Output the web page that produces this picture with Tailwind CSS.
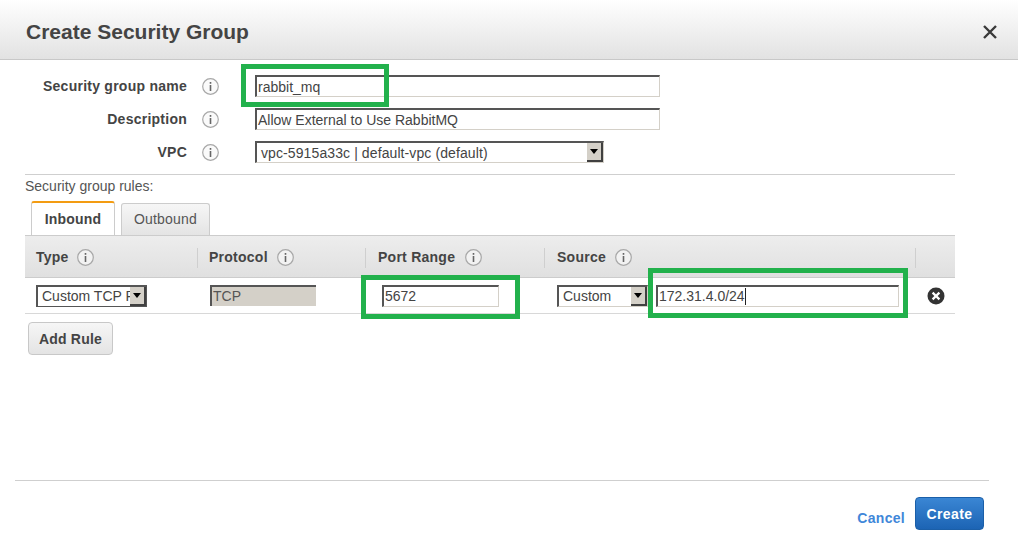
<!DOCTYPE html>
<html><head><meta charset="utf-8"><script src="https://cdn.jsdelivr.net/npm/@tailwindcss/browser@4"></script></head>
<body class="bg-white">
<div class="relative w-[1018px] h-[544px] overflow-hidden bg-white font-['Liberation_Sans',Arial,sans-serif] text-[#444]">
  <header class="h-[60px] flex items-center justify-between pt-[4px] pl-[26px] pr-[20px] bg-gradient-to-b from-white to-[#e2e2e2] border-b border-[#c8c8c8]">
    <h1 class="text-[21px] font-bold leading-none text-[#444]">Create Security Group</h1>
    <svg width="16" height="16" viewBox="0 0 16 16" class="block"><path d="M2 2 L14 14 M14 2 L2 14" stroke="#3a3a3a" stroke-width="2.4" fill="none"/></svg>
  </header>

  <section class="pt-[15px] flex flex-col gap-[11px]">
    <div class="flex items-center h-[22px]">
      <label class="w-[187px] text-right text-[14px] font-bold tracking-[0.25px]">Security group name</label>
      <span class="ml-[15px] mr-[36px]"><svg width="17" height="17" viewBox="0 0 17 17" class="block"><circle cx="8.5" cy="8.5" r="7.8" fill="#fafafa" stroke="#a8a8a8" stroke-width="1.2"/><rect x="7.7" y="7" width="1.6" height="6" fill="#666"/><rect x="7.7" y="4" width="1.6" height="1.8" fill="#666"/></svg></span>
      <div class="w-[405px] h-[22px] border-2 border-t-[#555] border-l-[#555] border-r-[#d4d0c8] border-b-[#d4d0c8] border-r border-b pl-px text-[14px] leading-[20px] text-[#444] whitespace-nowrap">rabbit_mq</div>
    </div>
    <div class="flex items-center h-[22px]">
      <label class="w-[187px] text-right text-[14px] font-bold tracking-[0.25px]">Description</label>
      <span class="ml-[15px] mr-[36px]"><svg width="17" height="17" viewBox="0 0 17 17" class="block"><circle cx="8.5" cy="8.5" r="7.8" fill="#fafafa" stroke="#a8a8a8" stroke-width="1.2"/><rect x="7.7" y="7" width="1.6" height="6" fill="#666"/><rect x="7.7" y="4" width="1.6" height="1.8" fill="#666"/></svg></span>
      <div class="w-[405px] h-[22px] border-2 border-t-[#555] border-l-[#555] border-r-[#d4d0c8] border-b-[#d4d0c8] border-r border-b pl-px text-[14px] leading-[20px] text-[#444] whitespace-nowrap">Allow External to Use RabbitMQ</div>
    </div>
    <div class="flex items-center h-[22px]">
      <label class="w-[187px] text-right text-[14px] font-bold tracking-[0.25px]">VPC</label>
      <span class="ml-[15px] mr-[36px]"><svg width="17" height="17" viewBox="0 0 17 17" class="block"><circle cx="8.5" cy="8.5" r="7.8" fill="#fafafa" stroke="#a8a8a8" stroke-width="1.2"/><rect x="7.7" y="7" width="1.6" height="6" fill="#666"/><rect x="7.7" y="4" width="1.6" height="1.8" fill="#666"/></svg></span>
      <div class="w-[349px] h-[22px] flex justify-between border-2 border-t-[#555] border-l-[#555] border-r-[#d4d0c8] border-b-[#d4d0c8] border-r border-b pl-[4px] text-[14px] tracking-[0.1px] leading-[20px] text-[#444] whitespace-nowrap">
        <span>vpc-5915a33c | default-vpc (default)</span>
        <span class="w-[16px] h-[19px] flex items-center justify-center bg-[#d4d0c8] border-r-2 border-b-2 border-[#404040]"><svg width="8" height="5" viewBox="0 0 8 5"><path d="M0 0H8L4 5Z" fill="#000"/></svg></span>
      </div>
    </div>
  </section>

  <div class="mt-[11px] ml-[25px] w-[930px] border-t border-[#cfcfcf]"></div>
  <p class="ml-[25px] mt-[3px] text-[14px] leading-[16px] text-[#555]">Security group rules:</p>

  <div class="ml-[31px] mt-[7px] flex items-end h-[34px] gap-[6px]">
    <div class="w-[84px] h-[34px] flex items-center justify-center bg-white border border-b-0 border-[#ccc] border-t-2 border-t-[#f39c12] rounded-t-[3px] text-[14px] font-bold tracking-[0.2px]">Inbound</div>
    <div class="w-[89px] h-[32px] flex items-center justify-center bg-gradient-to-b from-[#f6f6f6] to-[#e4e4e4] border border-b-0 border-[#ccc] rounded-t-[3px] text-[14px] tracking-[0.2px] text-[#555]">Outbound</div>
  </div>

  <div class="ml-[25px] w-[930px]">
    <div class="h-[43px] pt-[2px] flex items-center bg-gradient-to-b from-[#ededed] to-[#e0e0e0] border-t border-b border-[#cccccc] text-[14px] font-bold tracking-[0.25px]">
      <div class="w-[173px] h-[20px] flex items-center pl-[11px] border-r border-[#cfcfcf] gap-[8px]">Type <svg width="17" height="17" viewBox="0 0 17 17" class="block"><circle cx="8.5" cy="8.5" r="7.8" fill="#f2f2f2" stroke="#a8a8a8" stroke-width="1.2"/><rect x="7.7" y="7" width="1.6" height="6" fill="#666"/><rect x="7.7" y="4" width="1.6" height="1.8" fill="#666"/></svg></div>
      <div class="w-[168px] h-[20px] flex items-center pl-[11px] border-r border-[#cfcfcf] gap-[9px]">Protocol <svg width="17" height="17" viewBox="0 0 17 17" class="block"><circle cx="8.5" cy="8.5" r="7.8" fill="#f2f2f2" stroke="#a8a8a8" stroke-width="1.2"/><rect x="7.7" y="7" width="1.6" height="6" fill="#666"/><rect x="7.7" y="4" width="1.6" height="1.8" fill="#666"/></svg></div>
      <div class="w-[179px] h-[20px] flex items-center pl-[12px] border-r border-[#cfcfcf] gap-[10px]">Port Range <svg width="17" height="17" viewBox="0 0 17 17" class="block"><circle cx="8.5" cy="8.5" r="7.8" fill="#f2f2f2" stroke="#a8a8a8" stroke-width="1.2"/><rect x="7.7" y="7" width="1.6" height="6" fill="#666"/><rect x="7.7" y="4" width="1.6" height="1.8" fill="#666"/></svg></div>
      <div class="w-[371px] h-[20px] flex items-center pl-[12px] border-r border-[#cfcfcf] gap-[9px]">Source <svg width="17" height="17" viewBox="0 0 17 17" class="block"><circle cx="8.5" cy="8.5" r="7.8" fill="#f2f2f2" stroke="#a8a8a8" stroke-width="1.2"/><rect x="7.7" y="7" width="1.6" height="6" fill="#666"/><rect x="7.7" y="4" width="1.6" height="1.8" fill="#666"/></svg></div>
    </div>
    <div class="h-[36px] flex items-center border-b border-[#d8d8d8] text-[14px]">
      <div class="ml-[11px] w-[111px] h-[22px] flex justify-between overflow-hidden border-2 border-t-[#555] border-l-[#555] border-r-[#555] border-b-[#555] border-r border-b pl-[4px] leading-[19px] whitespace-nowrap"><span class="w-[88px] overflow-hidden">Custom TCP Rule</span><span class="w-[16px] h-[19px] flex items-center justify-center bg-[#d4d0c8] border-r-2 border-b-2 border-[#404040]"><svg width="8" height="5" viewBox="0 0 8 5"><path d="M0 0H8L4 5Z" fill="#000"/></svg></span></div>
      <div class="ml-[63px] w-[106px] h-[21px] bg-[#d4d0c8] border-t-2 border-l-2 border-[#555] pl-px leading-[18px] text-[#555]">TCP</div>
      <div class="ml-[66px] w-[117px] h-[22px] border-2 border-t-[#555] border-l-[#555] border-r-[#d4d0c8] border-b-[#d4d0c8] border-r border-b pl-px leading-[18px]">5672</div>
      <div class="ml-[58px] w-[91px] h-[22px] flex justify-between border-2 border-t-[#555] border-l-[#555] border-r-[#d4d0c8] border-b-[#d4d0c8] border-r border-b pl-[4px] leading-[19px]"><span>Custom</span><span class="w-[16px] h-[19px] flex items-center justify-center bg-[#d4d0c8] border-r-2 border-b-2 border-[#404040]"><svg width="8" height="5" viewBox="0 0 8 5"><path d="M0 0H8L4 5Z" fill="#000"/></svg></span></div>
      <div class="ml-[8px] w-[243px] h-[22px] flex items-center border-2 border-t-[#555] border-l-[#555] border-r-[#d4d0c8] border-b-[#d4d0c8] border-r border-b pl-px leading-[20px]"><span>172.31.4.0/24</span><span class="w-px h-[17px] bg-[#222]"></span></div>
      <svg width="18" height="18" viewBox="0 0 18 18" class="block ml-[28px]"><circle cx="9" cy="9" r="8.5" fill="#333"/><path d="M5.6 5.6 L12.4 12.4 M12.4 5.6 L5.6 12.4" stroke="#fff" stroke-width="2.2"/></svg>
    </div>
  </div>

  <button class="block ml-[28px] mt-[8px] w-[85px] h-[33px] pt-[2px] rounded-[4px] border border-[#c8c8c8] bg-gradient-to-b from-[#f6f6f6] to-[#e4e4e4] text-[14px] font-bold tracking-[0.2px] text-[#444]">Add Rule</button>

  <footer class="mt-[125px] ml-[15px] w-[974px] border-t border-[#cfcfcf] pt-[16px] pr-[5px] flex justify-end items-start gap-[10px]">
    <span class="mt-[13px] text-[14px] leading-[16px] font-bold tracking-[0.3px] text-[#3f87d9]">Cancel</span>
    <button class="w-[69px] h-[33px] pt-[2px] rounded-[4px] border border-[#1b5fa8] bg-gradient-to-b from-[#3a86d4] to-[#1c64b4] text-[14px] font-bold tracking-[0.4px] text-white">Create</button>
  </footer>

  <div class="absolute left-[241px] top-[64px] w-[148px] h-[43px] border-[5px] border-[#22b14c]"></div>
  <div class="absolute left-[361px] top-[275px] w-[159px] h-[44px] border-[5px] border-[#22b14c]"></div>
  <div class="absolute left-[648px] top-[268px] w-[260px] h-[50px] border-[5px] border-[#22b14c]"></div>
</div>
</body></html>
